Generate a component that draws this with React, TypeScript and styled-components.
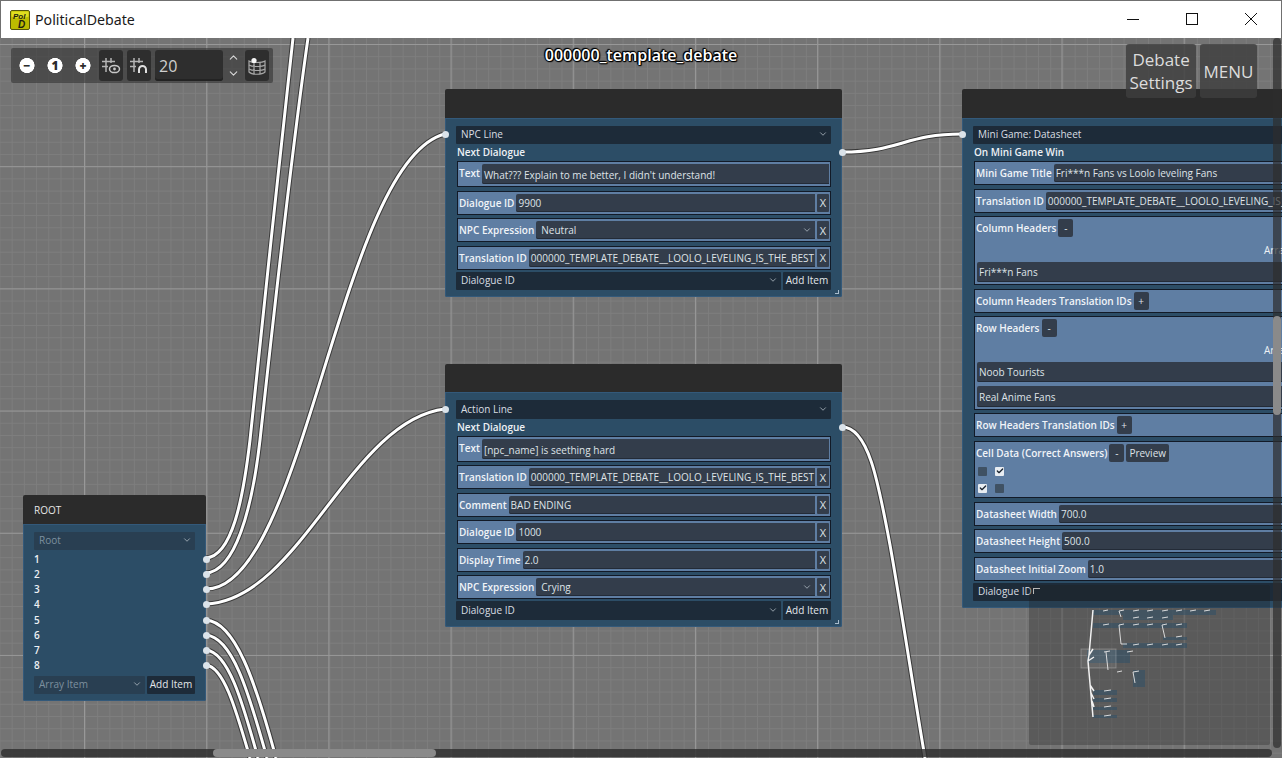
import React from "react";
import styled, { createGlobalStyle } from "styled-components";
import { ChevronDown, ChevronUp, Check } from "lucide-react";

const GlobalStyle = createGlobalStyle`
  html, body {
    margin: 0;
    padding: 0;
    overflow: hidden;
    background: #747474;
    font-family: "Open Sans", "Noto Sans", sans-serif;
  }
`;

type FieldData = { label: string; value: string; select?: boolean; removable?: boolean };

const npcFields: FieldData[] = [
  { label: "Dialogue ID", value: "9900", removable: true },
  { label: "NPC Expression", value: "Neutral", select: true, removable: true },
  { label: "Translation ID", value: "000000_TEMPLATE_DEBATE__LOOLO_LEVELING_IS_THE_BEST", removable: true },
];

const actionFields: FieldData[] = [
  { label: "Translation ID", value: "000000_TEMPLATE_DEBATE__LOOLO_LEVELING_IS_THE_BEST", removable: true },
  { label: "Comment", value: "BAD ENDING", removable: true },
  { label: "Dialogue ID", value: "1000", removable: true },
  { label: "Display Time", value: "2.0", removable: true },
  { label: "NPC Expression", value: "Crying", select: true, removable: true },
];

const Field = ({ label, value, select, removable }: FieldData) => (
  <FieldRow>
    <FieldLabel>{label}</FieldLabel>
    <FieldValue $select={select}>
      <span>{value}</span>
      {select && <ChevronDown size={10} strokeWidth={2} />}
    </FieldValue>
    {removable && <RemoveButton>X</RemoveButton>}
  </FieldRow>
);

const AddRow = ({ label }: { label: string }) => (
  <FieldRow>
    <FieldLabel>{label}</FieldLabel>
    <SmallButton>+</SmallButton>
  </FieldRow>
);

const Select = ({ text, muted }: { text: string; muted?: boolean }) => (
  <Dropdown $muted={muted}>
    <span>{text}</span>
    <ChevronDown size={10} strokeWidth={2} />
  </Dropdown>
);

const Wire = ({ d }: { d: string }) => (
  <>
    <path d={d} fill="none" stroke="#2e2e2e" strokeOpacity="0.85" strokeWidth="5" />
    <path d={d} fill="none" stroke="#ffffff" strokeWidth="3" />
  </>
);

const wires = [
  "M206 558 C232 556 243 500 250 440 C262 330 280 150 293 38",
  "M206 573 C235 571 252 510 260 440 C272 330 292 150 308 38",
  "M206 589 C305 590 340 160 445 134",
  "M206 604 C300 600 350 420 445 409",
  "M206 620 C235 622 255 680 276 758",
  "M206 635 C232 637 248 690 267 758",
  "M206 650 C228 652 242 700 258 758",
  "M206 665 C224 667 236 710 250 758",
  "M842 152 C900 152 905 134 962 134",
  "M842 427 C868 427 878 480 890 545 C900 600 915 700 925 758",
];

const GridEyeIcon = () => (
  <svg width="20" height="20" viewBox="0 0 20 20" fill="none" stroke="#b4b4b4" strokeWidth="1.5">
    <path d="M5 2v14M10 2v5M1 5.5h13M1 10.5h6" />
    <ellipse cx="13.5" cy="13" rx="5" ry="3.6" stroke="#c8c8c8" />
    <circle cx="13.5" cy="13" r="1.4" fill="#c8c8c8" stroke="none" />
  </svg>
);

const GridSnapIcon = () => (
  <svg width="20" height="20" viewBox="0 0 20 20" fill="none" stroke="#b4b4b4" strokeWidth="1.5">
    <path d="M5 2v14M10 2v5M1 5.5h13M1 10.5h6" />
    <path d="M10 17v-3.5a3.5 3.5 0 0 1 7 0V17" stroke="#e0e0e0" strokeWidth="2" />
  </svg>
);

const MapIcon = () => (
  <svg width="20" height="20" viewBox="0 0 20 20" fill="none" stroke="#a8a8a8" strokeWidth="1.2">
    <path d="M2 5c3 2 13 2 16 0v11c-3 3-13 3-16 0z" />
    <path d="M2 9c3 2 13 2 16 0M2 13c3 2 13 2 16 0M7 6.5V18M13 6.5V18" />
    <circle cx="7" cy="4.5" r="2.6" fill="#f4f4f4" stroke="none" />
  </svg>
);

const MinimizeIcon = () => (
  <svg width="12" height="12" viewBox="0 0 12 12" fill="none" stroke="#111" strokeWidth="1">
    <path d="M0 6.5h12" />
  </svg>
);

const MaximizeIcon = () => (
  <svg width="12" height="12" viewBox="0 0 12 12" fill="none" stroke="#111" strokeWidth="1">
    <rect x="0.5" y="0.5" width="11" height="11" />
  </svg>
);

const CloseIcon = () => (
  <svg width="12" height="12" viewBox="0 0 12 12" fill="none" stroke="#111" strokeWidth="1">
    <path d="M0 0l12 12M12 0L0 12" />
  </svg>
);

const AppLogo = () => (
  <svg width="20" height="20" viewBox="0 0 20 20">
    <rect x="0.5" y="0.5" width="19" height="19" rx="1.5" fill="#bdbb00" stroke="#55550c" />
    <path d="M1.5 1.5h17v5c-5 2-12 2-17 0z" fill="#e0de20" />
    <text x="3" y="9" fontSize="8" fontStyle="italic" fontWeight="700" fill="#1d1d10" fontFamily="Liberation Sans, sans-serif">Pol</text>
    <text x="8" y="18" fontSize="10" fontStyle="italic" fontWeight="700" fill="#1d1d10" fontFamily="Liberation Sans, sans-serif">D</text>
  </svg>
);

const miniBlocks = [
  [64, 25, 123, 5], [94, 30, 50, 5], [64, 38, 94, 5], [134, 52, 24, 3], [94, 58, 64, 5],
  [58, 65, 43, 13], [104, 85, 12, 17], [64, 105, 24, 5], [64, 113, 24, 4], [64, 122, 24, 3], [64, 130, 24, 3],
];

const miniTrunk = "M64 25 L60 70 L59 76 L64 132 M60 70 L64 64 M59 76 L65 72 M61 100 L65 106 M62 108 L65 114 M63 116 L65 122";

const miniLines =
  "M74 26 L79 25 M90 26 L95 25 M90 26 L92 32 M104 26 L110 25 M118 26 L124 25 M133 26 L139 25 M147 26 L153 25 M161 26 L167 25 M175 26 L181 25 " +
  "M104 33 L110 32 M118 33 L124 32 M133 33 L139 32 M74 40 L80 39 M90 40 L95 39 M90 40 L92 59 M104 40 L110 39 M118 40 L124 39 M133 40 L136 53 M133 40 L138 39 M147 40 L153 39 M147 52 L153 51 " +
  "M92 59 L98 59 M104 60 L110 59 M118 60 L124 59 M133 60 L139 59 M147 60 L153 59 M75 67 L81 66 M77 67 L79 85 M98 67 L104 66 M88 87 L93 86 M104 87 L106 98 M104 87 L110 86 " +
  "M75 106 L82 105 M75 114 L82 113 M75 122 L82 121 M75 131 L82 130";

export default function App() {
  return (
    <Window>
      <GlobalStyle />
      <TitleBar>
        <AppTitle>
          <AppLogo />
          <span>PoliticalDebate</span>
        </AppTitle>
        <WindowControls>
          <WindowButton><MinimizeIcon /></WindowButton>
          <WindowButton><MaximizeIcon /></WindowButton>
          <WindowButton><CloseIcon /></WindowButton>
        </WindowControls>
      </TitleBar>

      <Canvas>
        <WireLayer viewBox="0 38 1282 720" width="1282" height="720">
          {wires.map((d) => (
            <Wire key={d} d={d} />
          ))}
        </WireLayer>

        <GraphNode $x={23} $y={457} $w={183}>
          <NodeHeader>ROOT</NodeHeader>
          <NodeBody>
            <Select text="Root" muted />
            <SlotList>
              {[1, 2, 3, 4, 5, 6, 7, 8].map((n) => (
                <SlotRow key={n}>
                  {n}
                  <Port $side="right" />
                </SlotRow>
              ))}
            </SlotList>
            <NodeFooter>
              <Select text="Array Item" muted />
              <AddItem>Add Item</AddItem>
            </NodeFooter>
          </NodeBody>
        </GraphNode>

        <GraphNode $x={445} $y={51} $w={397}>
          <NodeHeader />
          <NodeBody>
            <PortAnchor>
              <Select text="NPC Line" />
              <Port $side="left" />
            </PortAnchor>
            <NextRow>
              Next Dialogue
              <Port $side="right" />
            </NextRow>
            <FieldList>
              <TextField>
                <FieldLabel>Text</FieldLabel>
                <FieldValue>What??? Explain to me better, I didn't understand!</FieldValue>
              </TextField>
              {npcFields.map((f) => (
                <Field key={f.label} {...f} />
              ))}
            </FieldList>
            <NodeFooter>
              <Select text="Dialogue ID" />
              <AddItem>Add Item</AddItem>
            </NodeFooter>
            <ResizeGrip />
          </NodeBody>
        </GraphNode>

        <GraphNode $x={445} $y={325.5} $w={397}>
          <NodeHeader />
          <NodeBody>
            <PortAnchor>
              <Select text="Action Line" />
              <Port $side="left" />
            </PortAnchor>
            <NextRow>
              Next Dialogue
              <Port $side="right" />
            </NextRow>
            <FieldList>
              <TextField>
                <FieldLabel>Text</FieldLabel>
                <FieldValue>[npc_name] is seething hard</FieldValue>
              </TextField>
              {actionFields.map((f) => (
                <Field key={f.label} {...f} />
              ))}
            </FieldList>
            <NodeFooter>
              <Select text="Dialogue ID" />
              <AddItem>Add Item</AddItem>
            </NodeFooter>
            <ResizeGrip />
          </NodeBody>
        </GraphNode>

        <GraphNode $x={962} $y={51} $w={628}>
          <NodeHeader />
          <NodeBody>
            <PortAnchor>
              <Select text="Mini Game: Datasheet" />
              <Port $side="left" />
            </PortAnchor>
            <NextRow>On Mini Game Win</NextRow>
            <FieldList>
              <Field label="Mini Game Title" value="Fri***n Fans vs Loolo leveling Fans" />
              <Field label="Translation ID" value="000000_TEMPLATE_DEBATE__LOOLO_LEVELING_IS_THE_BEST" />
              <BlockField>
                <BlockHead>
                  <FieldLabel>Column Headers</FieldLabel>
                  <SmallButton>-</SmallButton>
                </BlockHead>
                <ArrayTitle>Array</ArrayTitle>
                <ItemInput>Fri***n Fans</ItemInput>
              </BlockField>
              <AddRow label="Column Headers Translation IDs" />
              <BlockField>
                <BlockHead>
                  <FieldLabel>Row Headers</FieldLabel>
                  <SmallButton>-</SmallButton>
                </BlockHead>
                <ArrayTitle>Array</ArrayTitle>
                <ItemInput>Noob Tourists</ItemInput>
                <ItemInput>Real Anime Fans</ItemInput>
              </BlockField>
              <AddRow label="Row Headers Translation IDs" />
              <BlockField>
                <BlockHead>
                  <FieldLabel>Cell Data (Correct Answers)</FieldLabel>
                  <SmallButton>-</SmallButton>
                  <SmallButton>Preview</SmallButton>
                </BlockHead>
                <CheckGrid>
                  <CheckCell />
                  <CheckCell $checked><Check size={8} strokeWidth={4} /></CheckCell>
                  <CheckCell $checked><Check size={8} strokeWidth={4} /></CheckCell>
                  <CheckCell />
                </CheckGrid>
              </BlockField>
              <Field label="Datasheet Width" value="700.0" />
              <Field label="Datasheet Height" value="500.0" />
              <Field label="Datasheet Initial Zoom" value="1.0" />
            </FieldList>
            <NodeFooter>
              <Select text="Dialogue ID" />
              <AddItem>Add Item</AddItem>
            </NodeFooter>
          </NodeBody>
        </GraphNode>

        <Toolbar>
          <ZoomButton>−</ZoomButton>
          <ZoomButton>1</ZoomButton>
          <ZoomButton>+</ZoomButton>
          <ToolButton $gap={2}><GridEyeIcon /></ToolButton>
          <ToolButton $gap={4}><GridSnapIcon /></ToolButton>
          <SnapInput>20</SnapInput>
          <Spinner>
            <ChevronUp size={13} strokeWidth={2} />
            <ChevronDown size={13} strokeWidth={2} />
          </Spinner>
          <ToolButton $gap={2}><MapIcon /></ToolButton>
        </Toolbar>

        <GraphTitle>000000_template_debate</GraphTitle>

        <TopActions>
          <ActionButton>Debate Settings</ActionButton>
          <ActionButton>MENU</ActionButton>
        </TopActions>

        <MiniMap>
          <MiniGrip />
          <svg width="241" height="160" viewBox="0 0 241 160">
            {miniBlocks.map(([x, y, w, h]) => (
              <rect key={`${x}-${y}`} x={x} y={y} width={w} height={h} fill="#2f5068" fillOpacity="0.55" />
            ))}
            <rect x="52" y="64" width="35" height="19" fill="#ffffff" fillOpacity="0.08" stroke="#ffffff" strokeOpacity="0.22" />
            <path d={miniTrunk} fill="none" stroke="#f2f2f2" strokeWidth="1.5" />
            <path d={miniLines} fill="none" stroke="#e8e8e8" strokeWidth="0.9" />
          </svg>
        </MiniMap>

        <VScroll><VThumb /></VScroll>
        <HScroll><HThumb /></HScroll>
      </Canvas>
    </Window>
  );
}

const Window = styled.div`
  width: 1282px;
  height: 758px;
  display: flex;
  flex-direction: column;
  overflow: hidden;
`;

const TitleBar = styled.header`
  height: 38px;
  box-sizing: border-box;
  flex: none;
  display: flex;
  align-items: center;
  justify-content: space-between;
  padding-left: 9px;
  background: #ffffff;
  border: 1px solid #707070;
  border-bottom: none;
`;

const AppTitle = styled.div`
  display: flex;
  align-items: center;
  gap: 5px;
  font-family: "Noto Sans", "Open Sans", sans-serif;
  font-size: 14.2px;
  color: #1a1a1a;
`;

const WindowControls = styled.div`
  display: flex;
  height: 100%;
  box-sizing: border-box;
  padding: 0 1px 2px 0;
`;

const WindowButton = styled.div`
  width: 59px;
  display: flex;
  align-items: center;
  justify-content: center;

  svg {
    display: block;
  }
`;

const Canvas = styled.main`
  position: relative;
  flex: 1;
  overflow: hidden;
  background-color: #747474;
  background-image:
    linear-gradient(to right, #989898 1px, transparent 1px),
    linear-gradient(to bottom, #989898 1px, transparent 1px),
    linear-gradient(to right, #7e7e7e 1px, transparent 1px),
    linear-gradient(to bottom, #7e7e7e 1px, transparent 1px);
  background-size: 122.2px 122.2px, 122.2px 122.2px, 12.22px 12.22px, 12.22px 12.22px;
  background-position: 84px 6px, 84px 6px, 11.66px 6px, 11.66px 6px;
`;

const WireLayer = styled.svg`
  position: absolute;
  inset: 0;
`;

const GraphNode = styled.section<{ $x: number; $y: number; $w: number }>`
  position: absolute;
  left: ${(p) => p.$x}px;
  top: ${(p) => p.$y}px;
  width: ${(p) => p.$w}px;
  display: flex;
  flex-direction: column;
  font-size: 10px;
  color: #eef1f5;
`;

const NodeHeader = styled.div`
  height: 28.5px;
  box-sizing: border-box;
  padding: 1px 0 0 11px;
  display: flex;
  align-items: center;
  background: #2b2b2b;
  border-radius: 2px 2px 0 0;
  color: #e6e6e6;
`;

const NodeBody = styled.div`
  position: relative;
  display: flex;
  flex-direction: column;
  padding: 8px 11px 7px;
  background: #2c4d66;
  box-shadow: inset 0 0 0 1px #33597a;
  border-radius: 0 0 2px 2px;
`;

const Dropdown = styled.div<{ $muted?: boolean }>`
  flex: 1 1 auto;
  min-width: 0;
  height: 18.5px;
  box-sizing: border-box;
  padding: 0 3px 1px 5px;
  display: flex;
  align-items: center;
  justify-content: space-between;
  background: ${(p) => (p.$muted ? "#293f52" : "#1d2b39")};
  color: ${(p) => (p.$muted ? "#7d909f" : "#d9dee3")};
  border-radius: 1px;

  svg {
    color: #a9b4bd;
  }
`;

const PortAnchor = styled.div`
  position: relative;
  display: flex;
`;

const Port = styled.i<{ $side: "left" | "right" }>`
  position: absolute;
  top: 50%;
  width: 7px;
  height: 7px;
  margin-top: -3.5px;
  border-radius: 50%;
  background: #dbe3ea;
  ${(p) => (p.$side === "left" ? "left: -14.5px;" : "right: -14.5px;")}
`;

const NextRow = styled.div`
  position: relative;
  height: 17px;
  line-height: 17px;
  padding-left: 1px;
  font-weight: 550;
`;

const SlotList = styled.div`
  display: flex;
  flex-direction: column;
  margin-top: 1.5px;
`;

const SlotRow = styled.div`
  position: relative;
  height: 15.25px;
  line-height: 15.25px;
  font-weight: 550;
`;

const FieldList = styled.div`
  display: flex;
  flex-direction: column;
  gap: 3.5px;
`;

const FieldRow = styled.div`
  height: 24px;
  box-sizing: border-box;
  flex: none;
  display: flex;
  align-items: stretch;
  margin-left: 1px;
  padding: 2px 1px;
  background: #5f7ea3;
  border: 1px solid #121a27;
`;

const FieldLabel = styled.div`
  flex: none;
  padding: 0 2px 0 0;
  display: flex;
  align-items: center;
  font-weight: 550;
  white-space: nowrap;
  color: #f1f4f8;
`;

const FieldValue = styled.div<{ $select?: boolean }>`
  flex: 1;
  min-width: 0;
  padding: 0 3px 0 ${(p) => (p.$select ? "5px" : "2px")};
  display: flex;
  align-items: center;
  justify-content: space-between;
  white-space: nowrap;
  overflow: hidden;
  background: #333d4b;
  border-radius: 2px 0 0 2px;
  box-shadow: inset 0 -1px #232b37;
  color: #dfe3e8;

  svg {
    flex: none;
    color: #a9b4bd;
  }
`;

const TextField = styled(FieldRow)`
  height: 26px;

  ${FieldLabel} {
    padding-bottom: 2px;
  }

  ${FieldValue} {
    padding-top: 2px;
  }
`;

const RemoveButton = styled.div`
  flex: none;
  width: 12px;
  margin-left: 2px;
  display: flex;
  align-items: center;
  justify-content: center;
  background: #333d4b;
  border-radius: 1px;
  font-size: 11px;
  color: #dfe3e8;
`;

const NodeFooter = styled.div`
  display: flex;
  gap: 2px;
  margin-top: 2px;
`;

const AddItem = styled.div`
  flex: none;
  width: 48px;
  height: 18.5px;
  padding-bottom: 1px;
  box-sizing: border-box;
  display: flex;
  align-items: center;
  justify-content: center;
  background: #1d2b39;
  border-radius: 1px;
  white-space: nowrap;
  color: #e3e7eb;
`;

const ResizeGrip = styled.div`
  position: absolute;
  right: 3px;
  bottom: 3px;
  width: 3px;
  height: 3px;
  border-right: 1px solid #a8bccd;
  border-bottom: 1px solid #a8bccd;
`;

const BlockField = styled.div`
  flex: none;
  box-sizing: border-box;
  margin-left: 1px;
  padding: 2px 1px;
  background: #5f7ea3;
  border: 1px solid #121a27;
`;

const BlockHead = styled.div`
  height: 18px;
  display: flex;
  align-items: stretch;
`;

const SmallButton = styled.div`
  flex: none;
  min-width: 15px;
  margin-right: 2px;
  padding: 0 3px;
  box-sizing: border-box;
  display: flex;
  align-items: center;
  justify-content: center;
  background: #333d4b;
  border-radius: 2px;
  color: #dfe3e8;
`;

const ArrayTitle = styled.div`
  height: 24.5px;
  line-height: 26px;
  text-align: center;
`;

const ItemInput = styled.div`
  height: 20.5px;
  box-sizing: border-box;
  margin: 0 0 4px 1px;
  padding: 1px 2px 0;
  display: flex;
  align-items: center;
  background: #333d4b;
  border-radius: 2px;
  box-shadow: inset 0 -1px #232b37;
  color: #dfe3e8;

  &:last-child {
    margin-bottom: 0;
  }
`;

const CheckGrid = styled.div`
  display: grid;
  grid-template-columns: repeat(2, 9px);
  grid-auto-rows: 9px;
  gap: 8px;
  padding: 5px 0 2.5px 2px;
  justify-content: start;
`;

const CheckCell = styled.div<{ $checked?: boolean }>`
  width: 9px;
  height: 9px;
  display: flex;
  align-items: center;
  justify-content: center;
  border-radius: 1px;
  background: ${(p) => (p.$checked ? "#e8edf2" : "#3f5163")};
  color: #1b2430;
`;

const Toolbar = styled.div`
  position: absolute;
  left: 11px;
  top: 10px;
  width: 262px;
  height: 35px;
  box-sizing: border-box;
  padding: 2px 4px 2px 2px;
  display: flex;
  align-items: stretch;
  background: rgba(50, 50, 50, 0.6);
  border-radius: 2px;
  z-index: 2;
`;

const ZoomButton = styled.div`
  flex: none;
  width: 28px;
  display: flex;
  align-items: center;
  justify-content: center;
  font-size: 12px;
  line-height: 15px;
  font-weight: 800;
  color: #2c2c2c;
  background: radial-gradient(circle at center, #ffffff 7.3px, transparent 7.8px);
`;

const ToolButton = styled.div<{ $gap: number }>`
  flex: none;
  width: 24px;
  margin-left: ${(p) => p.$gap}px;
  display: flex;
  align-items: center;
  justify-content: center;
  background: #2e2e2e;
  border-radius: 3px;
`;

const SnapInput = styled.div`
  flex: none;
  width: 68px;
  margin-left: 4px;
  padding-left: 4px;
  box-sizing: border-box;
  display: flex;
  align-items: center;
  background: #2e2e2e;
  border-radius: 3px;
  box-shadow: inset 0 -2px #232323;
  font-size: 16px;
  color: #cfcfcf;
`;

const Spinner = styled.div`
  flex: none;
  width: 20px;
  display: flex;
  flex-direction: column;
  align-items: center;
  justify-content: center;
  gap: 3px;
  color: #d8d8d8;
`;

const GraphTitle = styled.div`
  position: absolute;
  left: 0;
  right: 0;
  top: 7px;
  line-height: 20px;
  text-align: center;
  font-size: 16px;
  font-weight: 600;
  color: #ffffff;
  text-shadow: 1px 0 1px #000, -1px 0 1px #000, 0 1px 1px #000, 0 -1px 1px #000, 1px 1px 1px #000, -1px -1px 1px #000;
  z-index: 2;
`;

const TopActions = styled.div`
  position: absolute;
  right: 25px;
  top: 6px;
  height: 54px;
  display: flex;
  gap: 4px;
  z-index: 2;
`;

const ActionButton = styled.div`
  padding: 0 3.5px;
  max-width: 63px;
  display: flex;
  align-items: center;
  justify-content: center;
  text-align: center;
  background: rgba(62, 62, 62, 0.82);
  border-radius: 3px;
  font-size: 17px;
  line-height: 23px;
  color: #dcdcdc;
`;

const MiniMap = styled.div`
  position: absolute;
  right: 12px;
  bottom: 13px;
  width: 241px;
  height: 160px;
  background: rgba(30, 30, 30, 0.3);
  border-radius: 2px;
  z-index: 2;

  svg {
    display: block;
  }
`;

const MiniGrip = styled.div`
  position: absolute;
  left: 4px;
  top: 3px;
  width: 6px;
  height: 5px;
  border-top: 1px solid #b8b8b8;
  border-left: 1px solid #b8b8b8;
`;

const VScroll = styled.div`
  position: absolute;
  right: 1px;
  top: 0;
  bottom: 10px;
  width: 8px;
  background: rgba(45, 45, 45, 0.7);
  border-radius: 4px;
  z-index: 3;
`;

const VThumb = styled.div`
  height: 99px;
  margin-top: 278px;
  background: #8a8a8a;
  border-radius: 4px;
`;

const HScroll = styled.div`
  position: absolute;
  left: 1px;
  right: 10px;
  bottom: 1px;
  height: 8px;
  background: rgba(45, 45, 45, 0.8);
  border-radius: 4px;
  z-index: 3;
`;

const HThumb = styled.div`
  width: 223px;
  height: 100%;
  margin-left: 212px;
  background: #8a8a8a;
  border-radius: 4px;
`;
